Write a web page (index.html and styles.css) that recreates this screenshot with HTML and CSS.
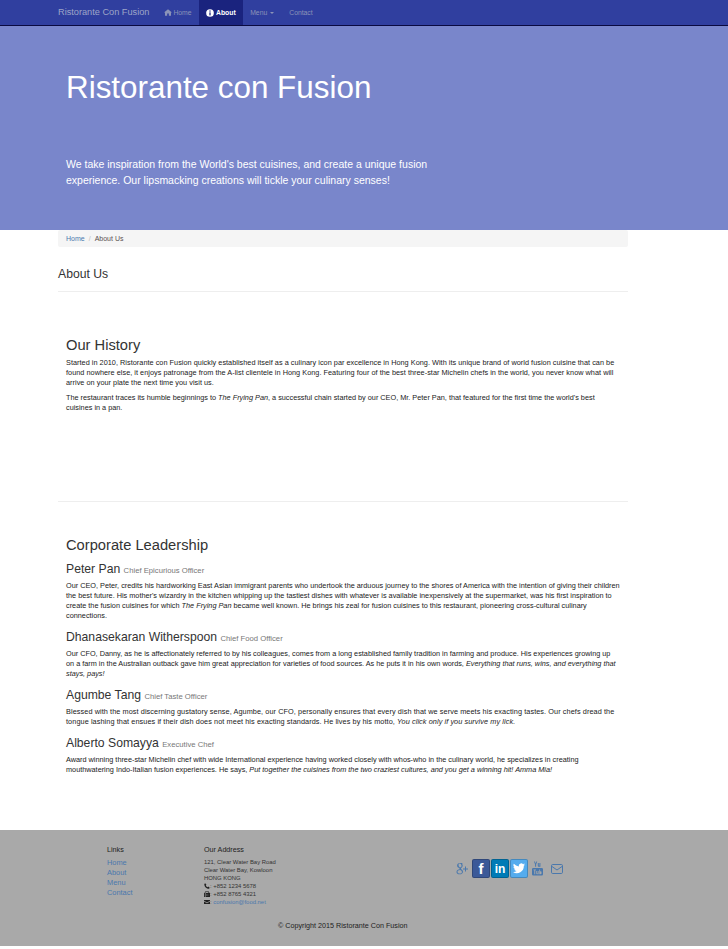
FILE: index.html
```html
<!DOCTYPE html>
<html lang="en">
<head>
<meta charset="utf-8">
<title>About Us - Ristorante Con Fusion</title>
<link rel="stylesheet" href="styles.css">
</head>
<body>
<nav class="navbar">
  <div class="container nav-inner">
    <a class="brand">Ristorante Con Fusion</a>
    <a class="nav-link"><svg class="nav-ico" viewBox="0 0 12 10"><path d="M6 0 0 5h1.500v5h3.200V6.500h2.600V10h3.200V5H12z"/></svg>Home</a>
    <a class="nav-link active"><svg class="nav-ico" viewBox="0 0 10 10"><circle cx="5" cy="5" r="4.800" fill="#fff"/><rect x="4.200" y="4.200" width="1.600" height="3.800" fill="#1a237e"/><rect x="4.200" y="1.800" width="1.600" height="1.500" fill="#1a237e"/></svg>About</a>
    <a class="nav-link">Menu <span class="caret"></span></a>
    <a class="nav-link">Contact</a>
  </div>
</nav>
<header class="jumbotron">
  <div class="jumbo-inner">
    <h1>Ristorante con Fusion</h1>
    <p>We take inspiration from the World's best cuisines, and create a unique fusion experience. Our lipsmacking creations will tickle your culinary senses!</p>
  </div>
</header>
<main class="container">
  <div class="breadcrumb"><a>Home</a><span class="sep">/</span><span>About Us</span></div>
  <h3 class="page-title">About Us</h3>
  <hr class="rule">
  <section class="history">
    <h2>Our History</h2>
    <p class="loose-sm">Started in 2010, Ristorante con Fusion quickly established itself as a culinary icon par excellence in Hong Kong. With its unique brand of world fusion cuisine that can be<br>found nowhere else, it enjoys patronage from the A-list clientele in Hong Kong. Featuring four of the best three-star Michelin chefs in the world, you never know what will<br>arrive on your plate the next time you visit us.</p>
    <p>The restaurant traces its humble beginnings to <em>The Frying Pan</em>, a successful chain started by our CEO, Mr. Peter Pan, that featured for the first time the world's best<br>cuisines in a pan.</p>
  </section>
  <hr class="rule">
  <section class="leaders">
    <h2>Corporate Leadership</h2>
    <h4>Peter Pan <small>Chief Epicurious Officer</small></h4>
    <p>Our CEO, Peter, credits his hardworking East Asian immigrant parents who undertook the arduous journey to the shores of America with the intention of giving their children<br>the best future. His mother's wizardry in the kitchen whipping up the tastiest dishes with whatever is available inexpensively at the supermarket, was his first inspiration to<br>create the fusion cuisines for which <em>The Frying Pan</em> became well known. He brings his zeal for fusion cuisines to this restaurant, pioneering cross-cultural culinary<br>connections.</p>
    <h4>Dhanasekaran Witherspoon <small>Chief Food Officer</small></h4>
    <p>Our CFO, Danny, as he is affectionately referred to by his colleagues, comes from a long established family tradition in farming and produce. His experiences growing up<br>on a farm in the Australian outback gave him great appreciation for varieties of food sources. As he puts it in his own words, <em>Everything that runs, wins, and everything that<br>stays, pays!</em></p>
    <h4>Agumbe Tang <small>Chief Taste Officer</small></h4>
    <p class="loose">Blessed with the most discerning gustatory sense, Agumbe, our CFO, personally ensures that every dish that we serve meets his exacting tastes. Our chefs dread the<br>tongue lashing that ensues if their dish does not meet his exacting standards. He lives by his motto, <em>You click only if you survive my lick.</em></p>
    <h4>Alberto Somayya <small>Executive Chef</small></h4>
    <p>Award winning three-star Michelin chef with wide International experience having worked closely with whos-who in the culinary world, he specializes in creating<br>mouthwatering Indo-Italian fusion experiences. He says, <em>Put together the cuisines from the two craziest cultures, and you get a winning hit! Amma Mia!</em></p>
  </section>
</main>
<footer class="footer">
  <div class="footer-row">
    <div class="links">
      <h5>Links</h5>
      <a>Home</a><a>About</a><a>Menu</a><a>Contact</a>
    </div>
    <div class="address">
      <h5>Our Address</h5>
      <address>121, Clear Water Bay Road<br>Clear Water Bay, Kowloon<br>HONG KONG<br>
      <svg class="addr-ico" viewBox="0 0 10 10"><path d="M2 .5 4 3 3 4.200C3.500 5.500 4.500 6.500 5.800 7L7 6l2.500 2-1 1.500C4 9.500 .5 6 .5 1.500z"/></svg>: +852 1234 5678<br>
      <svg class="addr-ico" viewBox="0 0 10 10"><path d="M0 3h1.500v7H0zM2.500 0h5v3H10v7H2.500zM3.500 1v2.500h3V1zM4 5v1h1V5zm2 0v1h1V5zM4 7v1h1V7zm2 0v1h1V7z" fill-rule="evenodd"/></svg>: +852 8765 4321<br>
      <svg class="addr-ico" viewBox="0 0 10 10"><path d="M0 1.500h10v1.500L5 6 0 3zM0 4l5 3 5-3v4.500H0z"/></svg>: <a>confusion@food.net</a></address>
    </div>
    <div class="social">
      <svg class="soc-plain gp" viewBox="0 0 12 14"><path d="M5.800 1H3.300C1.700 1 .6 2.100.6 3.500c0 1.400 1 2.400 2.400 2.400-.3.500-.2 1 .2 1.400C1.500 7.400 0 8.300 0 9.900 0 11.300 1.300 12.300 3.200 12.300c2 0 3.300-1.200 3.300-2.600 0-1.900-2-2.200-2-3 0-.8 1.700-1 1.700-3.100 0-.8-.3-1.400-.8-1.900h.7zM3.300 1.600c.9 0 1.500.9 1.700 1.900.1 1-.3 1.800-1.200 1.800-.9 0-1.500-.8-1.700-1.800-.1-1 .3-1.900 1.200-1.900zM3.500 8c1.100.4 1.900 1 1.900 1.900 0 1-.8 1.700-2.100 1.700-1.400 0-2.300-.8-2.300-1.800C1 8.800 2.200 8 3.500 8zM8.500 4.500h1v2h2v1h-2v2h-1v-2h-2v-1h2z"/></svg>
      <span class="soc-btn fb">f</span>
      <span class="soc-btn li">in</span>
      <span class="soc-btn tw"><svg viewBox="0 0 16 14"><path d="M16 1.700c-.6.300-1.200.400-1.900.500.700-.4 1.200-1 1.400-1.800-.6.400-1.300.6-2.100.8A3.300 3.300 0 0 0 7.800 4.200 9.300 9.300 0 0 1 1.100.8a3.300 3.300 0 0 0 1 4.400c-.5 0-1-.2-1.500-.4 0 1.600 1.100 2.900 2.600 3.200-.5.100-1 .2-1.500.1.400 1.300 1.600 2.200 3.100 2.300A6.600 6.600 0 0 1 0 11.700 9.300 9.300 0 0 0 14.400 3.400c.6-.4 1.200-1 1.600-1.700z"/></svg></span>
      <svg class="soc-plain yt" viewBox="0 0 11 14"><path d="M2 0h.9l.7 2 .7-2h.9L4.100 3v2.200h-1V3zM5.800 1.500h1v2.800h.6V1.500h1v3.700H6.700a.9.900 0 0 1-.9-.9zM1.200 6.500h8.600a1.200 1.200 0 0 1 1.200 1.200v5.100a1.200 1.200 0 0 1-1.200 1.200H1.200A1.200 1.200 0 0 1 0 12.800V7.700a1.200 1.200 0 0 1 1.200-1.200zM1.500 8v.8h.8v4h.9v-4H4V8zm2.800 1.500v2.600c0 .8.800.8 1.500.3v.4h.8V9.500h-.8v2.300c-.3.200-.7.300-.7 0V9.500zm3-1.500v4.800h.8v-.3c.7.500 1.400.2 1.400-.5v-1.600c0-.8-.7-1-1.400-.5V8z" fill-rule="evenodd"/></svg>
      <svg class="soc-plain mail" viewBox="0 0 12 10"><rect x=".5" y=".5" width="11" height="9" rx="1.200" fill="none" stroke="#4a78ad"/><path d="M1 2.500 6 6l5-3.500" fill="none" stroke="#4a78ad"/></svg>
    </div>
  </div>
  <p class="copyright">© Copyright 2015 Ristorante Con Fusion</p>
</footer>
</body>
</html>
```
FILE: styles.css
```css
* { box-sizing: border-box; }
html, body { margin: 0; padding: 0; }
body { font-family: "Liberation Sans", Arial, sans-serif; font-size: 7.300px; line-height: 10px; color: #1a1a1a; background: #fff; }
a { color: #4a78ad; text-decoration: none; }
.container { width: 570px; margin-left: 58px; }
.navbar { height: 26px; background: #303f9f; border-bottom: 1px solid #0a0a40; }
.nav-inner { display: flex; align-items: stretch; height: 25px; }
.brand { color: #9ea5c8; font-size: 9.200px; line-height: 25px; margin-right: 7.500px; }
.nav-link { display: flex; align-items: center; gap: 1px; padding: 0 7.500px; color: #8b93b8; font-size: 6.800px; }
.nav-link.active { background: #1a237e; color: #fff; font-weight: 700; gap: 2px; padding: 0 7px; }
.nav-ico { width: 8px; height: 7px; fill: #8b93b8; }
.active .nav-ico { height: 8px; }
.caret { display: inline-block; width: 0; height: 0; margin-left: 2px; border-top: 2px solid #8b93b8; border-left: 2px solid transparent; border-right: 2px solid transparent; }
.jumbotron { height: 204px; background: #7986cb; color: #fff; padding: 44px 0 0 66px; }
.jumbo-inner { width: 380px; }
.jumbotron h1 { margin: 0; font-size: 31.400px; font-weight: 400; line-height: 35px; white-space: nowrap; }
.jumbotron p { margin: 51px 0 0; font-size: 10.500px; line-height: 16px; }
.breadcrumb { display: flex; height: 17px; padding: 4px 8px; line-height: 9px; font-size: 7px; background: #f5f5f5; color: #5a5050; border-radius: 2px; }
.sep { color: #bbb; margin: 0 4px; }
.page-title { margin: 0; padding-top: 20px; font-size: 12.200px; font-weight: 400; line-height: 14px; color: #333; }
.rule { margin: 0; border: 0; border-top: 1px solid #eee; }
.page-title + .rule { margin-top: 10px; }
.history { height: 209px; padding: 45px 8px 0; }
.leaders { height: 328px; padding: 35px 8px 0; }
.history p, .leaders p { white-space: nowrap; }
.loose { letter-spacing: .08px; }
.loose-sm { letter-spacing: .03px; }
h2 { margin: 0 0 5px; font-size: 14.700px; font-weight: 400; line-height: 16px; color: #333; }
p { margin: 0 0 5px; }
h4 { margin: 10px 0 4px; font-size: 12.200px; font-weight: 400; line-height: 13px; color: #333; }
small { font-size: 7.700px; color: #777; }
.footer { height: 116px; background: #a9a9a9; padding-top: 15px; color: #333; }
.footer-row { display: flex; height: 76px; padding-left: 107px; }
h5 { margin: 0 0 3px; font-size: 7.200px; font-weight: 400; line-height: 10px; color: #222; }
.links { width: 97px; }
.links a { display: block; font-size: 7.400px; line-height: 10px; }
.address { width: 252px; }
address { font-style: normal; font-size: 5.900px; line-height: 8px; }
.addr-ico { width: 6px; height: 6px; fill: #222; vertical-align: -1px; }
.social { display: flex; align-items: center; height: 19px; gap: 1px; margin-top: 14px; }
.soc-plain { fill: #4a78ad; flex: none; }
.gp { width: 13px; height: 14px; margin-right: 2px; }
.yt { width: 11px; height: 15px; margin: 0 7px 0 3px; }
.mail { width: 12px; height: 10px; }
.soc-btn { display: flex; align-items: center; justify-content: center; width: 18px; height: 19px; border-radius: 2px; color: #fff; font-weight: 700; font-size: 12px; border: 1px solid rgba(0,0,0,.2); }
.soc-btn svg { width: 12px; height: 11px; fill: #fff; }
.fb { background: #3b5998; font-size: 15px; }
.li { background: #007bb6; }
.tw { background: #55acee; }
.copyright { margin: 0; padding-left: 278px; font-size: 7.200px; line-height: 10px; color: #222; }
```
